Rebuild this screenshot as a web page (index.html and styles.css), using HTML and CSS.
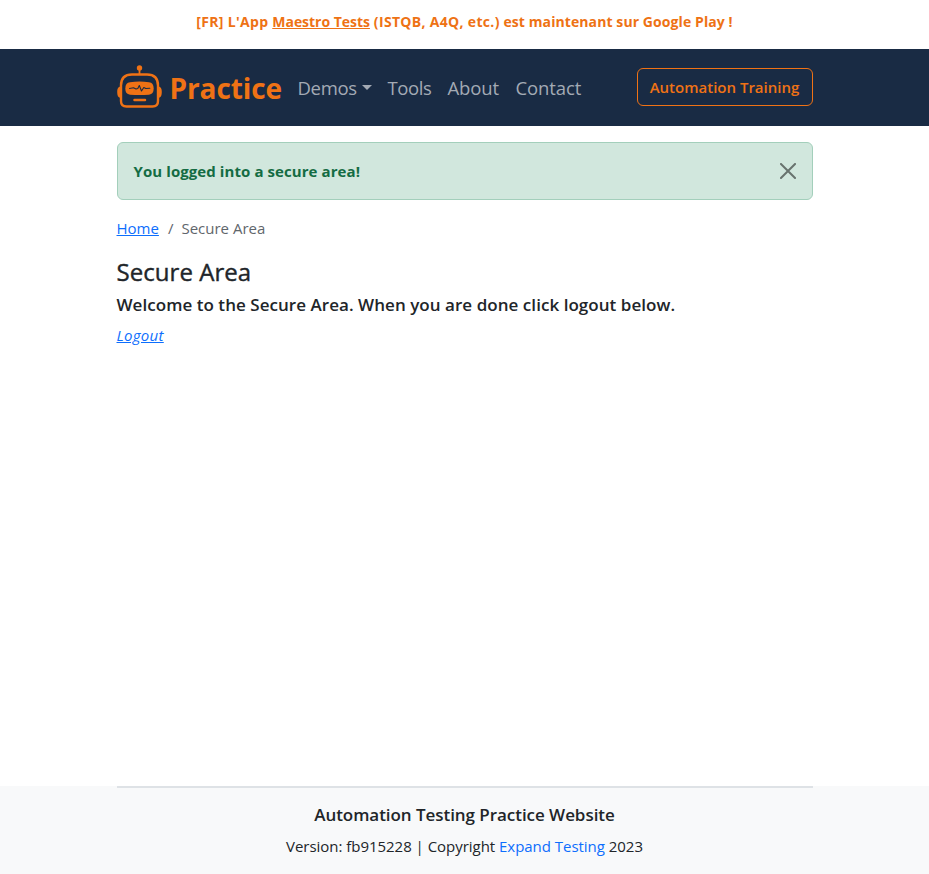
FILE: index.html
```html
<!DOCTYPE html>
<html lang="en">
<head>
<meta charset="utf-8">
<title>Secure Area</title>
<link rel="stylesheet" href="styles.css">
</head>
<body>
<div class="promo"><span class="promo-lead">[FR] L'App </span><a href="#">Maestro Tests</a><span class="promo-lead"> (ISTQB, A4Q, etc.)</span> est maintenant sur Google Play !</div>
<nav class="navbar">
  <div class="container nav-row">
    <a class="brand" href="#">
      <svg class="logo" width="45" height="45" viewBox="0 0 45 45" fill="none" stroke="currentColor">
        <circle cx="22.5" cy="3" r="2.7" fill="currentColor" stroke="none"/>
        <path d="M22.5 4v6" stroke-width="1.8"/>
        <path d="M15 9.500h15c7 0 11 4 11 11V36q0 5.500-5.500 5.500h-26Q4 41.500 4 36V20.500c0-7 4-11 11-11z" stroke-width="2.400"/>
        <path d="M3.500 21.500C1 22 .2 23.500.2 27s.8 5.500 3.300 6zM41.500 21.500c2.500.5 3.300 2 3.300 5.500s-.8 5.500-3.300 6z" fill="currentColor" stroke="none"/>
        <path d="M13 17.200Q22.500 16 32 17.200 36.700 17.800 36.700 23.500 36.700 29.200 32 29.700 22.500 30.500 13 29.700 8.300 29.200 8.300 23.500 8.300 17.800 13 17.200z" fill="currentColor" stroke="none"/>
        <path class="pulse" d="M12.500 23.500l4-.7 2.500 1.200 1.800-.5 1.500-3 2.200 5.500 2.300-3.500 2 1 4-.3" stroke-width="1.100" stroke-linejoin="round" stroke-linecap="round"/>
        <path d="M17.500 35h10.500" stroke-width="2.500" stroke-linecap="round"/>
      </svg>
      <span class="brand-name">Practice</span>
    </a>
    <a class="nav-link demos" href="#">Demos</a>
    <a class="nav-link tools" href="#">Tools</a>
    <a class="nav-link about" href="#">About</a>
    <a class="nav-link contact" href="#">Contact</a>
    <a class="training" href="#"><span>Automation Training</span></a>
  </div>
</nav>
<main class="container main">
  <div class="alert">
    <b>You logged into a secure area!</b>
    <svg class="close" width="16" height="16" viewBox="0 0 16 16"><path d="M.3.3l15.400 15.400M15.700.3L.3 15.700" stroke="currentColor" stroke-width="2"/></svg>
  </div>
  <div class="crumbs"><a class="home" href="#">Home</a><span class="slash">/</span><span class="current">Secure Area</span></div>
  <h3 class="title">Secure Area</h3>
  <h5 class="welcome">Welcome to the Secure Area. When you are done click logout below.</h5>
  <a class="logout" href="#">Logout</a>
</main>
<footer class="footer">
  <div class="container">
    <div class="footer-inner">
      <h5 class="footer-title">Automation Testing Practice Website</h5>
      <p class="version">Version: fb915228 | Copyright <a href="#">Expand Testing</a> 2023</p>
    </div>
  </div>
</footer>
</body>
</html>
```
FILE: styles.css
```css
* { box-sizing: border-box; }
body {
  margin: 0;
  min-height: 100vh;
  display: flex;
  flex-direction: column;
  font: 16px/24px "Open Sans", "Noto Sans", sans-serif;
  color: #212529;
  background: #fff;
  white-space: nowrap;
}
a { color: #0d6efd; }
h3, h5, p { margin: 0; }
.container { width: 720px; margin: 0 auto; padding: 0 12px; }
.promo { height: 49px; padding-top: 10px; text-align: center; color: #ee7214; font-size: 14px; font-weight: 700; letter-spacing: .09px; }
.promo-lead { letter-spacing: .32px; }
.promo a { color: inherit; letter-spacing: -.03px; }
.navbar { height: 77px; background: #192b44; }
.nav-row { height: 77px; display: flex; align-items: center; }
.brand { display: flex; align-items: center; width: 181px; color: #ef7215; text-decoration: none; }
.logo { flex: none; margin-right: 8px; }
.pulse { stroke: #192b44; }
.brand-name { font-size: 28px; font-weight: 700; line-height: 36px; letter-spacing: -.1px; }
.nav-link { color: #a3aab4; text-decoration: none; font-size: 18.500px; line-height: 30px; letter-spacing: -.1px; }
.demos { width: 90px; letter-spacing: -.3px; }
.demos::after { content: ""; display: inline-block; margin-left: 5px; vertical-align: 5px; border: 5px solid transparent; border-top-color: currentColor; border-bottom: 0; }
.tools { width: 60px; letter-spacing: -.4px; }
.about { width: 68px; }
.training { margin: 0 0 1px auto; width: 176px; height: 38px; border: 1px solid #ef7215; border-radius: 6px; color: #ef7215; font-weight: 600; font-size: 15px; line-height: 37px; text-align: center; text-decoration: none; }
.main { flex: 1; padding-top: 16px; }
.alert { height: 58px; padding: 0 16px; display: flex; align-items: center; justify-content: space-between; background: #d1e7dd; border: 1px solid #a3cfbb; border-radius: 6px; color: #146c43; font-size: 15px; letter-spacing: .08px; }
.close { color: #68736e; }
.crumbs { margin-top: 16px; display: flex; font-size: 15px; color: #5f666c; }
.slash { padding: 0 8px 0 9px; }
.title { margin-top: 17px; font-size: 24px; line-height: 30px; font-weight: 400; -webkit-text-stroke: .4px currentColor; letter-spacing: .05px; }
.welcome { margin-top: 6px; font-size: 17px; line-height: 24px; font-weight: 600; letter-spacing: .045px; }
.logout { display: block; width: max-content; margin-top: 6px; font-size: 15px; font-style: italic; letter-spacing: .3px; }
.footer { height: 88px; background: #f8f9fa; }
.footer-inner { border-top: 2px solid #dee2e6; padding-top: 15px; text-align: center; }
.footer-title { font-size: 17px; line-height: 24px; font-weight: 600; letter-spacing: -.05px; }
.version { margin-top: 7px; font-size: 15px; letter-spacing: -.03px; }
.version a { text-decoration: none; }
```
